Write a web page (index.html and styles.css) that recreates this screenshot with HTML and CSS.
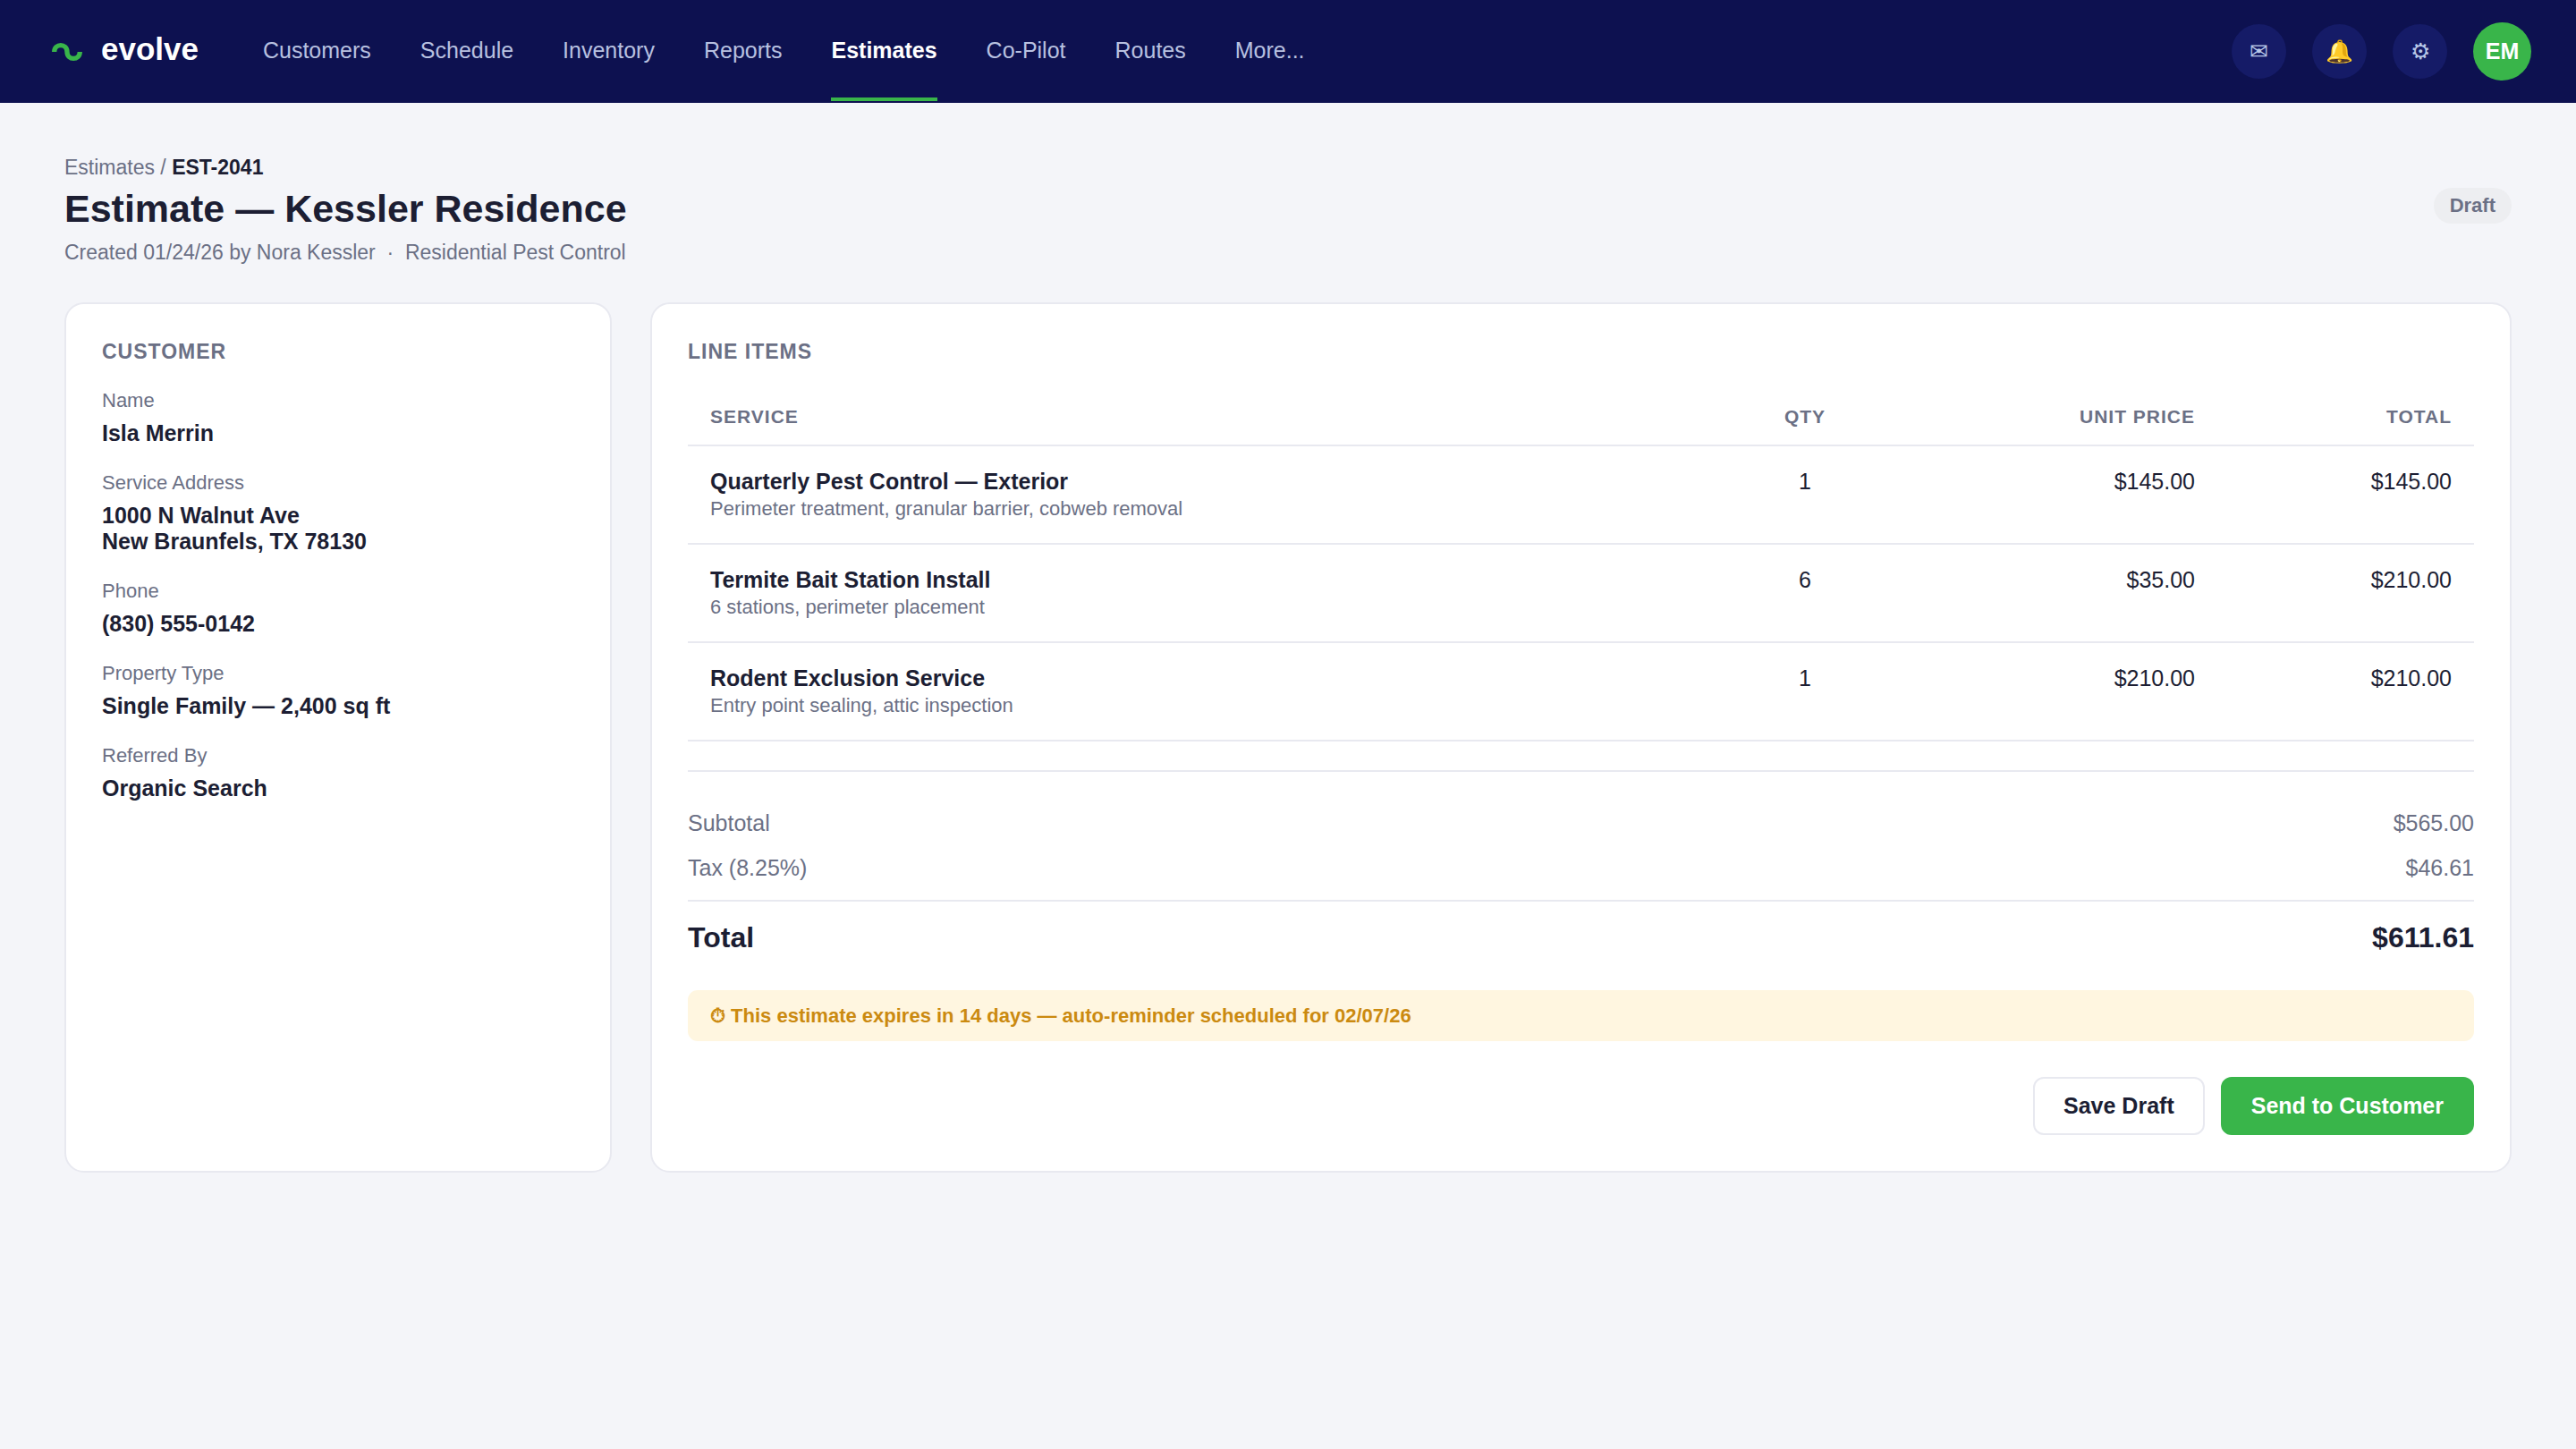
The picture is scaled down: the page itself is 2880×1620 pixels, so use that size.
FILE: index.html
```html
<!DOCTYPE html>
<html lang="en">
<head>
  <meta charset="UTF-8" />
  <meta name="viewport" content="width=device-width, initial-scale=1.0"/>
  <title>Estimate EST-2041 | evolve</title>
  <link rel="stylesheet" href="styles.css">
</head>
<body>

  <header class="navbar">
    <a href="#" class="brand">
      <svg class="brand-icon" viewBox="0 0 28 28" fill="none" aria-hidden="true">
        <path d="M6 14c0-5.500 8-5.500 8 0s8 5.500 8 0" stroke="#39b54a" stroke-width="3"/>
      </svg>
      <span class="brand-name">evolve</span>
    </a>
    <nav class="nav-links">
      <a href="#">Customers</a>
      <a href="#">Schedule</a>
      <a href="#">Inventory</a>
      <a href="#">Reports</a>
      <a href="#" class="active" aria-current="page">Estimates</a>
      <a href="#">Co-Pilot</a>
      <a href="#">Routes</a>
      <a href="#">More...</a>
    </nav>
    <div class="nav-actions">
      <button type="button" class="icon-btn" aria-label="Messages">✉</button>
      <button type="button" class="icon-btn" aria-label="Notifications">🔔</button>
      <button type="button" class="icon-btn" aria-label="Settings">⚙</button>
      <button type="button" class="avatar" aria-label="Account">EM</button>
    </div>
  </header>

  <main class="page">
    <div class="page-header">
      <div>
        <div class="breadcrumb"><a href="#">Estimates</a> / <strong>EST-2041</strong></div>
        <h1>Estimate — Kessler Residence</h1>
        <p class="subtitle">Created 01/24/26 by Nora Kessler &nbsp;·&nbsp; Residential Pest Control</p>
      </div>
      <span class="status">Draft</span>
    </div>

    <div class="layout">
      <section class="card">
        <h2>Customer</h2>
        <dl class="fields">
          <div>
            <dt>Name</dt>
            <dd>Isla Merrin</dd>
          </div>
          <div>
            <dt>Service Address</dt>
            <dd>1000 N Walnut Ave<br>New Braunfels, TX 78130</dd>
          </div>
          <div>
            <dt>Phone</dt>
            <dd>(830) 555-0142</dd>
          </div>
          <div>
            <dt>Property Type</dt>
            <dd>Single Family — 2,400 sq ft</dd>
          </div>
          <div>
            <dt>Referred By</dt>
            <dd>Organic Search</dd>
          </div>
        </dl>
      </section>

      <section class="card">
        <h2>Line Items</h2>
        <table class="items">
          <thead>
            <tr>
              <th>Service</th>
              <th class="qty">Qty</th>
              <th class="price">Unit Price</th>
              <th class="total">Total</th>
            </tr>
          </thead>
          <tbody>
            <tr>
              <td>
                <div class="item-name">Quarterly Pest Control — Exterior</div>
                <div class="item-desc">Perimeter treatment, granular barrier, cobweb removal</div>
              </td>
              <td class="qty">1</td>
              <td class="price">$145.00</td>
              <td class="total">$145.00</td>
            </tr>
            <tr>
              <td>
                <div class="item-name">Termite Bait Station Install</div>
                <div class="item-desc">6 stations, perimeter placement</div>
              </td>
              <td class="qty">6</td>
              <td class="price">$35.00</td>
              <td class="total">$210.00</td>
            </tr>
            <tr>
              <td>
                <div class="item-name">Rodent Exclusion Service</div>
                <div class="item-desc">Entry point sealing, attic inspection</div>
              </td>
              <td class="qty">1</td>
              <td class="price">$210.00</td>
              <td class="total">$210.00</td>
            </tr>
          </tbody>
        </table>

        <div class="summary">
          <div class="summary-row"><span>Subtotal</span><span>$565.00</span></div>
          <div class="summary-row"><span>Tax (8.25%)</span><span>$46.61</span></div>
          <div class="summary-row grand"><span>Total</span><span>$611.61</span></div>
        </div>

        <div class="notice">⏱ This estimate expires in 14 days — auto-reminder scheduled for 02/07/26</div>

        <div class="actions">
          <button type="button" class="btn">Save Draft</button>
          <button type="button" class="btn btn-primary">Send to Customer</button>
        </div>
      </section>
    </div>
  </main>

</body>
</html>
```
FILE: styles.css
```css
* {
  box-sizing: border-box;
}
body {
  margin: 0;
  font-family: "Liberation Sans", Arial, sans-serif;
  font-size: 25px;
  line-height: 29px;
  background: #f4f5f9;
  color: #1c1e33;
}
a {
  color: inherit;
  text-decoration: none;
}
button {
  font-family: inherit;
  cursor: pointer;
}
h1, h2, p, dl, dd {
  margin: 0;
}

/* top bar */
.navbar {
  display: flex;
  align-items: center;
  height: 115px;
  padding: 0 50px;
  background: #0d1150;
}
.brand {
  display: flex;
  align-items: center;
  gap: 13px;
  margin-right: 72px;
  font-size: 35px;
  font-weight: bold;
  color: #fff;
}
.brand-icon {
  width: 50px;
  height: 50px;
}
.brand-name {
  padding-bottom: 6px;
}
.nav-links {
  display: flex;
  gap: 55px;
}
.nav-links a {
  padding: 40px 0 38px;
  border-bottom: 4px solid transparent;
  color: #b8c1e0;
}
.nav-links .active {
  color: #fff;
  font-weight: bold;
  border-bottom-color: #39b54a;
}
.nav-actions {
  display: flex;
  align-items: center;
  gap: 29px;
  margin-left: auto;
}
.icon-btn {
  width: 61px;
  height: 61px;
  padding: 0;
  border: none;
  border-radius: 50%;
  background: #151b67;
  color: #b8c8e8;
  font-size: 25px;
}
.avatar {
  width: 65px;
  height: 65px;
  padding: 0;
  border: none;
  border-radius: 50%;
  background: #39b54a;
  color: #fff;
  font-size: 25px;
  font-weight: bold;
}

/* page header */
.page {
  padding: 59px 72px;
}
.page-header {
  display: flex;
  align-items: flex-start;
  justify-content: space-between;
  margin-bottom: 42px;
}
.breadcrumb, .subtitle {
  font-size: 23px;
  line-height: 27px;
  color: #6b7085;
}
.breadcrumb strong {
  color: #1c1e33;
}
h1 {
  margin: 5px 0 9px;
  font-size: 43px;
  line-height: 54px;
}
.status {
  margin-top: 36px;
  padding: 7px 18px;
  border-radius: 20px;
  background: #edeef1;
  color: #6b7085;
  font-size: 22px;
  line-height: 26px;
  font-weight: bold;
}

/* cards */
.layout {
  display: grid;
  grid-template-columns: 612px 1fr;
  gap: 43px;
}
.card {
  padding: 40px;
  background: #fff;
  border: 2px solid #e8e9f0;
  border-radius: 22px;
}
h2 {
  margin-bottom: 28px;
  font-size: 23px;
  line-height: 27px;
  letter-spacing: 1px;
  text-transform: uppercase;
  color: #6b7085;
}
.fields {
  display: grid;
  gap: 28px;
}
dt {
  margin-bottom: 9px;
  font-size: 22px;
  line-height: 26px;
  color: #6b7085;
}
dd {
  font-weight: bold;
}

/* line items */
.items {
  width: 100%;
  table-layout: fixed;
  border-collapse: collapse;
  margin-bottom: 32px;
}
.items th {
  padding: 17px 25px;
  border-bottom: 2px solid #e8e9f0;
  font-size: 21px;
  line-height: 28px;
  letter-spacing: 1px;
  text-align: left;
  text-transform: uppercase;
  color: #6b7085;
}
.items td {
  padding: 25px;
  border-bottom: 2px solid #e8e9f0;
  vertical-align: top;
}
.items .qty {
  width: 210px;
  text-align: center;
}
.items .price {
  width: 356px;
  text-align: right;
}
.items .total {
  width: 287px;
  text-align: right;
}
.item-name {
  font-weight: bold;
}
.item-desc {
  margin-top: 2px;
  font-size: 22px;
  line-height: 27px;
  color: #6b7085;
}

/* totals */
.summary {
  padding-top: 36px;
  border-top: 2px solid #e8e9f0;
}
.summary-row {
  display: flex;
  justify-content: space-between;
  padding: 7px 0 14px;
  color: #6b7085;
}
.grand {
  margin-top: 7px;
  padding: 22px 0 0;
  border-top: 2px solid #e8e9f0;
  font-size: 32px;
  line-height: 36px;
  font-weight: bold;
  color: #1c1e33;
}
.notice {
  margin-top: 41px;
  padding: 14px 25px;
  border-radius: 11px;
  background: #fff6e0;
  color: #cb8a10;
  font-size: 22px;
  font-weight: bold;
}
.actions {
  display: flex;
  justify-content: flex-end;
  gap: 18px;
  margin-top: 40px;
}
.btn {
  padding: 16px 32px;
  border: 2px solid #e8e9f0;
  border-radius: 12px;
  background: #fff;
  color: #1c1e33;
  font-size: 25px;
  line-height: 29px;
  font-weight: bold;
}
.btn-primary {
  border-color: #39b54a;
  background: #39b54a;
  color: #fff;
}
```
